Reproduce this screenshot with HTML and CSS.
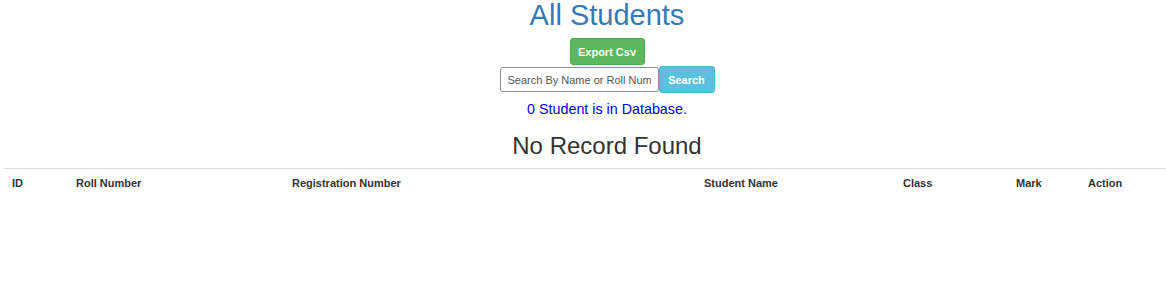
FILE: index.html
```html
<!DOCTYPE html>
<html>
<head>
<meta charset="utf-8">
<title>All Students</title>
<link rel="stylesheet" href="styles.css">
</head>
<body>
<div class="page">
  <h2 class="title">All Students</h2>
  <div class="export-row"><button class="btn btn-export">Export Csv</button></div>
  <form class="search-row">
    <input class="search-input" type="text" placeholder="Search By Name or Roll Number"><button class="btn btn-search" type="button">Search</button>
  </form>
  <p class="count">0 Student is in Database.</p>
  <h3 class="empty">No Record Found</h3>
  <table class="students">
    <colgroup>
      <col class="c-id"><col class="c-roll"><col class="c-reg"><col class="c-name"><col class="c-class"><col class="c-mark"><col class="c-action">
    </colgroup>
    <thead>
      <tr><th>ID</th><th>Roll Number</th><th>Registration Number</th><th>Student Name</th><th>Class</th><th>Mark</th><th>Action</th></tr>
    </thead>
    <tbody></tbody>
  </table>
</div>
</body>
</html>
```
FILE: styles.css
```css
html, body {
  margin: 0;
  padding: 0;
  overflow: hidden;
  background: #fff;
}
body {
  font-family: "Liberation Sans", Arial, sans-serif;
  color: #333;
}
.page {
  margin-left: 4px;
  width: 1206px;
  text-align: center;
}
.title {
  margin: 0;
  font-size: 29px;
  font-weight: normal;
  line-height: 31px;
  color: #337ab7;
}
.export-row {
  margin-top: 7px;
  display: flex;
  justify-content: center;
}
.btn {
  font-family: "Liberation Sans", Arial, sans-serif;
  font-weight: bold;
  font-size: 11px;
  color: #fff;
  border-radius: 3px;
  cursor: pointer;
}
.btn-export {
  width: 75px;
  height: 27px;
  padding: 0;
  background: #5cb85c;
  border: 1px solid #4cae4c;
}
.search-row {
  margin: 1px 0 0;
  display: flex;
  justify-content: center;
  align-items: center;
}
.search-input {
  box-sizing: border-box;
  width: 159px;
  height: 25px;
  margin: 0;
  padding: 0 7px;
  border: 1px solid #8f8f8f;
  border-radius: 3px;
  font-family: "Liberation Sans", Arial, sans-serif;
  font-size: 11px;
  color: #555;
}
.search-input::placeholder {
  color: #555;
}
.btn-search {
  width: 56px;
  height: 27px;
  padding: 0;
  background: #5bc0de;
  border: 1px solid #46b8da;
}
.count {
  margin: 6px 0 0;
  font-size: 14.3px;
  line-height: 20px;
  color: #0000ff;
}
.empty {
  margin: 14px 0 0;
  font-size: 24px;
  font-weight: normal;
  line-height: 26px;
  color: #333;
}
.students {
  margin-top: 9px;
  width: 1206px;
  table-layout: fixed;
  border-collapse: collapse;
  text-align: left;
}
.c-id { width: 64px; }
.c-roll { width: 216px; }
.c-reg { width: 412px; }
.c-name { width: 199px; }
.c-class { width: 113px; }
.c-mark { width: 72px; }
.c-action { width: 130px; }
.students th {
  border-top: 1px solid #ddd;
  padding: 7px 8px 8px 8px;
  font-size: 11px;
  line-height: 15px;
  font-weight: bold;
  color: #333;
}
```
